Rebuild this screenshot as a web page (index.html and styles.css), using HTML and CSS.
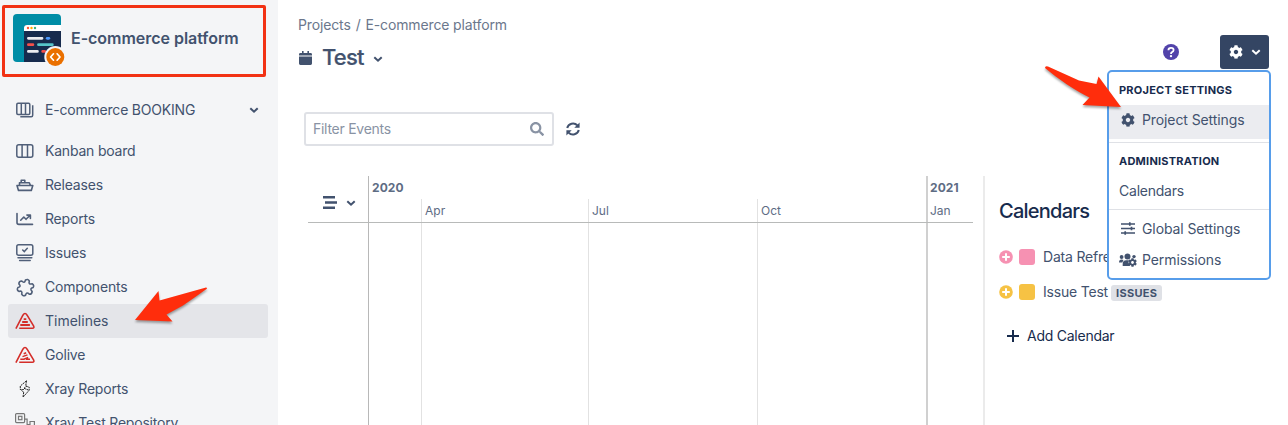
FILE: index.html
```html
<!DOCTYPE html>
<html lang="en">
<head>
<meta charset="utf-8">
<title>E-commerce platform – Timelines</title>
<link rel="stylesheet" href="styles.css">
</head>
<body>
<svg class="defs" width="0" height="0" aria-hidden="true">
  <symbol id="cog" viewBox="0 0 512 512"><path fill="currentColor" d="M487.4 315.7l-42.6-24.6c4.3-23.2 4.3-47 0-70.2l42.6-24.6c4.9-2.8 7.1-8.6 5.5-14-11.1-35.6-30-67.8-54.7-94.6-3.8-4.1-10-5.1-14.8-2.3L380.8 110c-17.9-15.4-38.5-27.3-60.8-35.1V25.8c0-5.6-3.9-10.5-9.4-11.7-36.7-8.2-74.3-7.8-109.2 0-5.5 1.2-9.4 6.1-9.4 11.7V75c-22.2 7.9-42.8 19.8-60.8 35.1L88.7 85.5c-4.9-2.8-11-1.9-14.8 2.3-24.7 26.7-43.6 58.9-54.7 94.6-1.7 5.4.6 11.2 5.5 14L67.3 221c-4.3 23.2-4.3 47 0 70.2l-42.6 24.6c-4.9 2.8-7.1 8.6-5.5 14 11.1 35.6 30 67.8 54.7 94.6 3.8 4.1 10 5.1 14.8 2.3l42.6-24.6c17.9 15.4 38.5 27.3 60.8 35.1v49.2c0 5.6 3.9 10.5 9.4 11.7 36.7 8.2 74.3 7.8 109.2 0 5.5-1.2 9.4-6.1 9.4-11.7v-49.2c22.2-7.9 42.8-19.8 60.8-35.1l42.6 24.6c4.9 2.8 11 1.9 14.8-2.3 24.7-26.7 43.6-58.9 54.7-94.6 1.5-5.5-.7-11.3-5.6-14.1zM256 336c-44.1 0-80-35.9-80-80s35.9-80 80-80 80 35.9 80 80-35.9 80-80 80z"/></symbol>
  <symbol id="chevron" viewBox="0 0 10 8"><path d="M1.3 2.2L5 5.7 8.700 2.2" fill="none" stroke="currentColor" stroke-width="2"/></symbol>
  <symbol id="plus-circle" viewBox="0 0 14 14"><circle cx="7" cy="7" r="6.8" fill="currentColor"/><path d="M7 3.2v7.6M3.2 7h7.6" stroke="#fff" stroke-width="2"/></symbol>
</svg>
<div class="app">
  <aside class="sidebar">
    <header class="project">
      <svg class="avatar" width="54" height="56" viewBox="0 0 54 56">
        <rect width="48" height="48" rx="4" fill="#008da6"/>
        <path d="M11 48V14a3 3 0 0 1 3-3h34v33a4 4 0 0 1-4 4z" fill="#172b4d"/>
        <path d="M11 17v-3a3 3 0 0 1 3-3h34v6z" fill="#fff"/>
        <g><circle cx="15" cy="14" r="1.2" fill="#ff5630"/><circle cx="18.5" cy="14" r="1.2" fill="#ffab00"/><circle cx="22" cy="14" r="1.2" fill="#36b37e"/></g>
        <g stroke-width="2.8" stroke-linecap="round"><path d="M15.4 24.3h13.6M15.4 37.4h9" stroke="#ebecf0"/><path d="M34.2 24.3h1.6" stroke="#4c9aff"/><path d="M15.4 30.7h4.5M29.7 37.4h2" stroke="#f4504b"/><path d="M25.5 30.7h13.8" stroke="#57c5c9"/></g>
        <circle cx="42.3" cy="43" r="11" fill="#f4f5f7"/><circle cx="42.3" cy="43" r="9" fill="#ea7000"/>
        <path d="M40.5 39.8L37.6 43l2.9 3.2M44.1 39.8L47 43l-2.9 3.2" fill="none" stroke="#fff" stroke-width="1.7" stroke-linecap="round" stroke-linejoin="round"/>
      </svg>
      <h2 class="project-name">E-commerce platform</h2>
    </header>
    <nav class="nav">
      <a class="item board"><svg class="icon" viewBox="0 0 20 20"><g fill="none" stroke="currentColor" stroke-width="1.5"><rect x="1.8" y="3.2" width="13" height="11.2" rx="1.2"/><path d="M6.3 3v11.4M10.5 3v11.4M5.3 16.8h10.9a1.5 1.5 0 0 0 1.5-1.5V5.2"/></g></svg><span>E-commerce BOOKING</span><svg class="chev" width="10" height="8"><use href="#chevron"/></svg></a>
      <a class="item"><svg class="icon" viewBox="0 0 20 20"><g fill="none" stroke="currentColor" stroke-width="1.5"><rect x="1.8" y="3.8" width="16" height="12.4" rx="2"/><path d="M7.1 4v12M12.5 4v12"/></g></svg><span>Kanban board</span></a>
      <a class="item"><svg class="icon" viewBox="0 0 20 20"><g fill="none" stroke="currentColor" stroke-width="1.6" stroke-linejoin="round"><path d="M2 10.5h15.8l-1.5 4.9H3.5zM4.5 10.5V7.7h9.8l1.2 2.8M6.2 7.5V5.2h3.6v2.3"/></g></svg><span>Releases</span></a>
      <a class="item"><svg class="icon" viewBox="0 0 20 20"><g fill="none" stroke="currentColor" stroke-width="1.6" stroke-linejoin="round" stroke-linecap="round"><path d="M2 4.5v9q0 1.9 1.9 1.9H17.5M5.7 11.2L8.8 8l2.2 2.3 4.2-4.1M11.9 6.1h3.5v3.4"/></g></svg><span>Reports</span></a>
      <a class="item"><svg class="icon" viewBox="0 0 20 20"><g fill="none" stroke="currentColor" stroke-width="1.5" stroke-linecap="round"><rect x="1.8" y="1.8" width="16" height="10.4" rx="1.8"/><path d="M7.7 7l1.6 1.6 3-3.3M3 14.7h13.8M4.6 17.5h10.6"/></g></svg><span>Issues</span></a>
      <a class="item"><svg class="icon" viewBox="0 0 20 20"><path d="M10 2.4Q12.4.9 13.8 3.4 12.7 7.3 16.6 6.2 19.1 7.6 17.6 10 13.7 11 16.6 13.8 16.6 16.6 13.8 16.6 11 13.7 10 17.6 7.6 19.1 6.2 16.6 7.3 12.7 3.4 13.8.9 12.4 2.4 10 6.3 9 3.4 6.2 3.400 3.400 6.200 3.400 9 6.300 10 2.400z" transform="translate(.5 .6)" fill="none" stroke="currentColor" stroke-width="1.6"/></svg><span>Components</span></a>
      <a class="item active"><svg class="icon red" viewBox="0 0 20 20"><g fill="none" stroke="currentColor" stroke-width="1.6" stroke-linejoin="round"><path d="M.9 17.6L7.900 4.200q2.100-3.300 4.200 0L18.700 15.200q.8 2-1.200 2H4.200"/><path d="M8.700 8.100h2.600M7.200 11h5.600M5.300 14h9.600" stroke-width="1.900"/></g></svg><span>Timelines</span></a>
      <a class="item"><svg class="icon red" viewBox="0 0 20 20"><g fill="none" stroke="currentColor" stroke-width="1.6" stroke-linejoin="round"><path d="M.9 17.6L7.900 4.200q2.100-3.300 4.200 0L18.700 15.200q.8 2-1.200 2H4.200"/><path d="M8.700 8.800L11.200 7.800M7.500 11.600l5-1.700M5.300 14.200h3.500l4.400-1.700M11 14.200h4" stroke-width="1.500"/></g></svg><span>Golive</span></a>
      <a class="item"><svg class="icon bolt" viewBox="0 0 20 20"><path d="M11.500 1.800L5.300 7v3.500h3.500M11.500 1.800l-.8 5.200 3.500 1.200v3L8 18.200l.7-5M8.700 13.200L5.500 10.500M9 9.300l2.700-2.300M9 9.300l4.800 1.900" fill="none" stroke="currentColor" stroke-width="1" stroke-dasharray="2 .7"/></svg><span>Xray Reports</span></a>
      <a class="item"><svg class="icon repo" viewBox="0 0 20 20"><g fill="none" stroke="currentColor" stroke-width="1.200"><rect x=".6" y=".6" width="9" height="9" rx="1"/><rect x="3.5" y="3.3" width="3.4" height="3.4"/><path d="M9.8 6.2h2.300v5.300h3M15 8.500h4.400v5H15z"/></g></svg><span>Xray Test Repository</span></a>
    </nav>
  </aside>
  <main class="main">
    <div class="crumbs"><span>Projects</span><span>/</span><span>E-commerce platform</span></div>
    <div class="title-row">
      <svg class="calendar" width="13" height="14" viewBox="0 0 13 14"><path d="M3 0h1.6v2H8.4V0H10v2h1.6Q13 2 13 3.4V4.4H0v-1Q0 2 1.4 2H3zM0 5.4h13v7.2q0 1.4-1.4 1.4H1.4Q0 14 0 12.6z" fill="currentColor"/></svg>
      <h1>Test</h1><svg class="title-chev" width="10" height="8"><use href="#chevron"/></svg>
      <div class="actions">
        <svg width="16" height="16" viewBox="0 0 16 16"><circle cx="8" cy="8" r="8" fill="#5243aa"/><path d="M5.4 6.2Q5.4 3.8 8 3.8t2.6 2.3Q10.6 7.500 9 8.200Q8 8.600 8 9.900" fill="none" stroke="#fff" stroke-width="1.8"/><circle cx="8" cy="12.100" r="1.200" fill="#fff"/></svg>
        <button class="settings-button"><svg width="14" height="14"><use href="#cog"/></svg><svg width="10" height="8"><use href="#chevron"/></svg></button>
      </div>
    </div>
    <div class="toolbar">
      <div class="filter"><span>Filter Events</span><svg width="14" height="14" viewBox="0 0 512 512"><path fill="currentColor" d="M505 442.700L405.300 343c-4.500-4.500-10.600-7-17-7H372c27.600-35.300 44-79.700 44-128C416 93.100 322.900 0 208 0S0 93.100 0 208s93.100 208 208 208c48.300 0 92.700-16.400 128-44v16.300c0 6.400 2.500 12.500 7 17l99.700 99.700c9.400 9.400 24.600 9.400 33.900 0l28.300-28.300c9.400-9.400 9.400-24.600.1-34zM208 336c-70.700 0-128-57.200-128-128 0-70.700 57.200-128 128-128 70.700 0 128 57.200 128 128 0 70.700-57.200 128-128 128z"/></svg></div>
      <svg class="sync" width="14" height="14" viewBox="0 0 14 14"><path d="M1.200 6A6 6 0 0 1 11.300 3.300M12.800 8A6 6 0 0 1 2.700 10.700" fill="none" stroke="currentColor" stroke-width="2"/><path d="M13.600.5v5.300H8.300zM.4 13.500V8.200h5.300z" fill="currentColor"/></svg>
    </div>
    <div class="content">
      <section class="timeline">
        <div class="tl-head">
          <div class="view-switch"><svg width="14" height="13" viewBox="0 0 14 13"><path d="M0 1.300h12M2 6.500h12M0 11.700h12" stroke="currentColor" stroke-width="2.400"/></svg><svg width="10" height="8"><use href="#chevron"/></svg></div>
          <div class="year y2020"><b>2020</b><div class="months"><span class="gap"></span><span class="month apr">Apr</span><span class="month jul">Jul</span><span class="month oct">Oct</span></div></div>
          <div class="year y2021"><b>2021</b><div class="months"><span>Jan</span></div></div>
        </div>
        <div class="tl-body"><i class="c0"></i><i class="c1"></i><i class="c2"></i><i class="c3"></i><i class="c4"></i><i class="c5"></i></div>
      </section>
      <section class="calendars">
        <h3>Calendars</h3>
        <div class="cal pink"><svg width="14" height="14"><use href="#plus-circle"/></svg><i class="swatch"></i><span>Data Refresh</span></div>
        <div class="cal yellow"><svg width="14" height="14"><use href="#plus-circle"/></svg><i class="swatch"></i><span>Issue Test</span><b class="tag">ISSUES</b></div>
        <div class="add"><svg width="12" height="12" viewBox="0 0 12 12"><path d="M6 0v12M0 6h12" stroke="currentColor" stroke-width="2"/></svg><span>Add Calendar</span></div>
      </section>
    </div>
  </main>
</div>
<div class="menu">
  <h4>PROJECT SETTINGS</h4>
  <div class="menu-item selected"><svg width="14" height="14"><use href="#cog"/></svg><span>Project Settings</span></div>
  <h4 class="admin">ADMINISTRATION</h4>
  <div class="menu-item plain"><span>Calendars</span></div>
  <div class="menu-group">
    <div class="menu-item"><svg width="14" height="13" viewBox="0 0 14 13"><path d="M0 2h14M0 6.500h14M0 11h14" stroke="currentColor" stroke-width="1.600"/><path d="M8.800.3v3.400M10.500 4.800v3.400M4.200 9.300v3.400" stroke="currentColor" stroke-width="1.700"/></svg><span>Global Settings</span></div>
    <div class="menu-item"><svg class="people" width="18" height="14" viewBox="0 0 18 14"><g fill="currentColor"><circle cx="2.600" cy="4" r="1.900"/><circle cx="8.500" cy="3.500" r="3"/><circle cx="15" cy="3.600" r="1.700"/><path d="M0 9.500q0-3 2.500-3 1.500 0 2 .5L3.300 9.500zM3.700 13v-2q0-3.700 3.500-3.700h2.500q-1 3 1.500 5.700z"/></g><svg x="9" y="5" width="9" height="9"><use href="#cog"/></svg></svg><span>Permissions</span></div>
  </div>
</div>
<div class="highlight"></div>
<svg class="arrow arrow-nav" width="80" height="44" viewBox="0 0 80 44"><path d="M5 36L28.500 7l1 9.500L76 3.500q2 0 .5 1.500Q64 14 53 21.500L36.500 30.500l6 7z" fill="#ff2d0c"/></svg>
<svg class="arrow arrow-menu" width="86" height="52" viewBox="0 0 86 52"><path d="M5 6q0-2.500 3-1.500L39 18.500l17.500 3.500 2-7.500 22.500 30.500-38.500-2 7-7.500Q40 31 27 22.500 15 14.500 5 6z" fill="#ff2d0c"/></svg>
</body>
</html>
```
FILE: styles.css
```css
* { box-sizing: border-box; }
body { margin: 0; position: relative; width: 1288px; height: 425px; overflow: hidden; background: #fff; color: #42526e; font: 14px/20px Inter, "Liberation Sans", sans-serif; }
h1, h2, h3, h4 { margin: 0; }
svg { display: block; flex: none; }
.defs { position: absolute; }
.app { display: flex; height: 425px; }
.sidebar { width: 278px; flex: none; background: #f4f5f7; overflow: hidden; }
.project { display: flex; height: 93px; padding: 14px 0 0 13px; gap: 4px; }
.project-name { margin-top: 14px; font-size: 16px; line-height: 20px; font-weight: 600; letter-spacing: -.03px; white-space: nowrap; }
.nav { padding: 0 10px 0 8px; }
.item { display: flex; align-items: center; height: 34px; padding: 0 9px 0 7px; border-radius: 3px; white-space: nowrap; letter-spacing: -.2px; }
.active { letter-spacing: 0; }
.board { margin-bottom: 7px; }
.icon { width: 20px; height: 20px; margin-right: 10px; color: #505f79; }
.chev { margin-left: auto; }
.active { background: #e4e5e9; }
.icon.red { color: #d42d29; }
.icon.bolt { color: #222; }
.icon.repo { color: #777; }
.main { flex: 1; min-width: 0; padding: 15px 0 0 20px; }
.crumbs { display: flex; gap: 5px; color: #6b778c; letter-spacing: -.14px; }
.title-row { display: flex; height: 34px; align-items: center; padding-right: 19px; }
.calendar { margin: 12px 10px 0 1px; }
h1 { margin-top: 10px; font-size: 22px; line-height: 28px; font-weight: 500; letter-spacing: -.8px; -webkit-text-stroke: .2px currentColor; }
.title-chev { margin: 13px 0 0 9px; }
.actions { display: flex; align-items: center; gap: 41px; margin-left: auto; }
.settings-button { display: flex; align-items: center; gap: 8px; width: 49px; height: 34px; border: 0; border-radius: 3px; padding: 0 0 0 9px; color: #fff; background: #344563; }
.toolbar { display: flex; align-items: center; gap: 12px; height: 34px; margin: 43px 0 30px 6px; }
.filter { display: flex; align-items: center; justify-content: space-between; width: 250px; height: 34px; padding: 0 8px 0 7px; border: 2px solid #dfe1e6; border-radius: 3px; color: #8993a4; letter-spacing: -.27px; }
.content { display: flex; height: 249px; padding-left: 10px; }
.timeline { width: 665px; }
.tl-head { display: flex; height: 47px; border-bottom: 1px solid #b8bab9; }
.view-switch { display: flex; width: 60px; padding: 7px 0 0 15px; align-items: center; gap: 9px; }
.year { display: flex; flex-direction: column; font-size: 12px; line-height: 16px; border-left: 1px solid #b8b8b8; color: #5e6c84; }
.year b { display: block; height: 23px; padding: 4px 0 0 3px; font-weight: 700; letter-spacing: .1px; }
.y2020 { width: 558px; }
.y2021 { width: 47px; border-left: 2px solid #d0d0d0; }
.y2021 b { padding-left: 2px; }
.y2021 .months { padding: 4px 0 0 2px; }
.months { display: flex; flex: 1; }
.month { padding: 4px 0 0 3px; border-left: 1px solid #e2e2e2; }
.gap { width: 52px; }
.apr { width: 167px; }
.jul { width: 169px; }
.tl-body { display: grid; grid-template-columns: 60px 53px 167px 169px 169px 47px; height: 202px; }
.tl-body i { border-left: 1px solid #e2e2e2; }
.tl-body .c0 { border: 0; }
.tl-body .c1 { border-color: #b8b8b8; }
.tl-body .c5 { border-left: 2px solid #d0d0d0; }
.calendars { flex: 1; margin-left: 10px; padding: 23px 0 0 14px; border-left: 2px solid #ebebeb; }
h3 { font-size: 20px; line-height: 24px; font-weight: 500; letter-spacing: -.75px; color: #172b4d; }
.cal { display: flex; align-items: center; height: 35px; white-space: nowrap; letter-spacing: -.2px; }
h3 + .cal { margin-top: 16px; }
.swatch { width: 16px; height: 16px; margin: 0 8px 0 6px; border-radius: 3px; background: currentColor; }
.cal span { color: #42526e; }
.pink { color: #f691b2; }
.yellow { color: #f6c244; }
.tag { margin: 2px 0 0 3px; padding: 0 5px; height: 16px; border-radius: 3px; background: #dfe1e6; color: #42526e; font-size: 11px; line-height: 16px; letter-spacing: .3px; }
.add { display: flex; align-items: center; gap: 8px; margin: 17px 0 0 8px; color: #172b4d; letter-spacing: -.25px; }
.menu { position: absolute; left: 1107px; top: 70px; width: 164px; height: 210px; border: 2px solid #579dea; border-radius: 5px; background: #fff; color: #42526e; }
.menu h4 { height: 33px; padding: 10px 0 0 10px; font-size: 11px; line-height: 16px; font-weight: 700; letter-spacing: .23px; color: #172b4d; white-space: nowrap; }
.menu-item { display: flex; align-items: center; gap: 7px; height: 31px; padding: 0 0 2px 12px; white-space: nowrap; letter-spacing: -.1px; }
.menu-item.selected { height: 34px; padding-bottom: 4px; background: #ebecf0; }
.menu .admin { height: 34px; margin-top: 3px; border-top: 1px solid #dfe1e6; }
.menu-item.plain { padding-left: 10px; letter-spacing: -.23px; }
.menu-group { margin-top: 2px; padding-top: 4px; border-top: 1px solid #dfe1e6; }
.people { margin: 0 -2px; }
.highlight { position: absolute; left: 2px; top: 5px; width: 264px; height: 72px; border: 3px solid #f23214; border-radius: 2px; }
.arrow { position: absolute; filter: drop-shadow(0 2px 1px rgba(0, 0, 0, .35)); }
.arrow-nav { left: 130px; top: 284px; }
.arrow-menu { left: 1040px; top: 62px; }
```
